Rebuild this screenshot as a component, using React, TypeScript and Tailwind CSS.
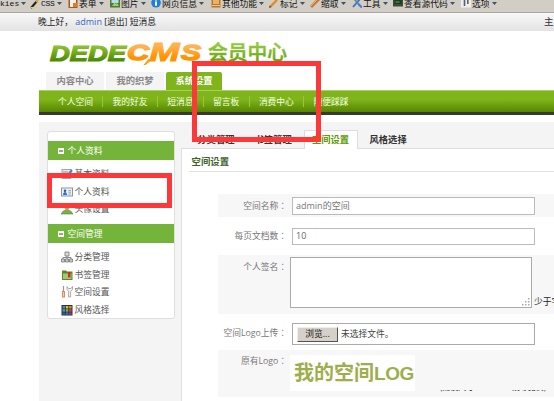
import React from 'react';

const toolbar = [
  { icon: 'css', label: 'CSS', w: 'w-[38px]' },
  { icon: 'form', label: '表单', w: 'w-[42px]' },
  { icon: 'image', label: '图片', w: 'w-[41px]' },
  { icon: 'info', label: '网页信息', w: 'w-[60px]' },
  { icon: 'misc', label: '其他功能', w: 'w-[58px]' },
  { icon: 'pencil', label: '标记', w: 'w-[41px]' },
  { icon: 'ruler', label: '缩取', w: 'w-[42px]' },
  { icon: 'tools', label: '工具', w: 'w-[41px]' },
  { icon: 'console', label: '查看源代码', w: 'w-[68px]' },
  { icon: 'options', label: '选项', w: 'w-[40px]' },
];

function ToolIcon({ name }: { name: string }) {
  return (
    <svg viewBox="0 0 10 10" className="h-[10px] w-[10px] shrink-0">
      {name === 'css' && (
        <>
          <path d="M1 9 7 2" stroke="#222" strokeWidth="2" />
          <path d="M1 8h6v1H0z" fill="#f0d040" />
          <path d="M6 3 9 0" stroke="#e0b030" strokeWidth="1.6" />
        </>
      )}
      {name === 'form' && (
        <>
          <rect x=".5" y="0" width="9" height="9" fill="#a85820" />
          <path d="M2 0h6v8H2z" fill="#f6f1ea" />
          <path d="M5 4h4v4H5z" fill="#e07a28" />
        </>
      )}
      {name === 'image' && (
        <>
          <rect x="0" y="0" width="10" height="8.5" fill="#4d7a34" />
          <path d="M1.500 1h7v3h-7z" fill="#b5dcec" />
          <path d="M2 7 4.500 3.500 6 5l1-1 2 3z" fill="#9fd069" />
        </>
      )}
      {name === 'info' && (
        <>
          <circle cx="5" cy="3.800" r="4.800" fill="#1d7edb" />
          <path d="M4 2.600h2v4.200H4zM4 0h2v1.500H4z" fill="#fff" />
        </>
      )}
      {name === 'misc' && (
        <>
          <rect x=".5" y="0" width="9" height="8.500" fill="#b8772c" />
          <path d="M2 0h6v5H2z" fill="#e7b566" />
          <path d="M1 6.500h8" stroke="#efca85" />
        </>
      )}
      {name === 'pencil' && (
        <>
          <path d="M1 8 8 1" stroke="#e08a2c" strokeWidth="2.400" />
          <path d="M0 9 .8 6.500 2.500 8z" fill="#704018" />
        </>
      )}
      {name === 'ruler' && (
        <>
          <path d="M1 8 9 0" stroke="#c87831" strokeWidth="3" />
          <path d="M1 7 8 0" stroke="#f0a860" />
        </>
      )}
      {name === 'tools' && (
        <>
          <path d="M1 8 8 0" stroke="#2e74c8" strokeWidth="1.800" />
          <path d="M2 0 9.500 8" stroke="#6e7c8c" strokeWidth="1.600" />
          <path d="M6 5 10 8.500" stroke="#3c82dc" strokeWidth="2" />
        </>
      )}
      {name === 'console' && (
        <>
          <rect x="0" y="0" width="10" height="7.500" fill="#40483f" />
          <path d="M1.500 1h7v4h-7z" fill="#1f3a20" />
          <path d="M2.500 3h4" stroke="#63b34a" />
        </>
      )}
      {name === 'options' && (
        <>
          <rect x="0" y="0" width="10" height="8.500" fill="#eceef0" />
          <path d="M3.500 0v7M6.800 0v5" stroke="#59616c" strokeWidth="1.600" />
        </>
      )}
    </svg>
  );
}

function Caret() {
  return (
    <svg viewBox="0 0 5 3" className="ml-[2px] h-[3px] w-[5px] shrink-0">
      <path d="M0 0h5L2.500 3z" fill="#3b5561" />
    </svg>
  );
}

function Logo() {
  return (
    <svg viewBox="0 0 240 30" className="h-[30px] w-[240px]">
      <defs>
        <linearGradient id="green" x1="0" y1="0" x2="0" y2="1">
          <stop offset=".25" stopColor="#8cc02c" />
          <stop offset=".55" stopColor="#6aa314" />
          <stop offset=".8" stopColor="#4e8c00" />
        </linearGradient>
        <linearGradient id="orange" x1="0" y1="0" x2="0" y2="1">
          <stop offset=".3" stopColor="#ffb24e" />
          <stop offset=".7" stopColor="#ff9200" />
        </linearGradient>
        <linearGradient id="lime" x1="0" y1="0" x2="0" y2="1">
          <stop offset=".3" stopColor="#92c83a" />
          <stop offset=".9" stopColor="#5f9f0c" />
        </linearGradient>
      </defs>
      <g fontFamily="'Liberation Sans', Arial, sans-serif" fontWeight="700" fontStyle="italic">
        <text x="1" y="19.500" fontSize="22.500" textLength="76" lengthAdjust="spacingAndGlyphs" fill="url(#green)" stroke="url(#green)" strokeWidth="1.200">DEDE</text>
        <text x="78" y="19.300" fontSize="22" textLength="22" lengthAdjust="spacingAndGlyphs" fill="url(#orange)" stroke="url(#orange)" strokeWidth="1.400">C</text>
        <text x="100.500" y="19.500" fontSize="25.500" textLength="30" lengthAdjust="spacingAndGlyphs" fill="url(#orange)" stroke="url(#orange)" strokeWidth="1">M</text>
        <text x="132" y="19.300" fontSize="22" textLength="20" lengthAdjust="spacingAndGlyphs" fill="url(#orange)" stroke="url(#orange)" strokeWidth="1.400">S</text>
      </g>
      <path d="m94.500 24 5-6h4.500l-7.500 6z" fill="#ff9a18" />
      <text x="159" y="18.800" fontSize="20" textLength="79" lengthAdjust="spacingAndGlyphs" fontFamily="'Noto Sans CJK SC', sans-serif" fontWeight="500" fill="url(#lime)" stroke="url(#lime)" strokeWidth=".5">会员中心</text>
    </svg>
  );
}

function SideIcon({ name }: { name: string }) {
  return (
    <svg viewBox="0 0 12 12" className="h-[12px] w-[12px] shrink-0">
      {name === 'edit' && (
        <>
          <rect x="1" y="1.500" width="9" height="9" fill="#e9ecee" stroke="#8b9299" strokeWidth=".8" />
          <path d="M2 4h5M2 6h4" stroke="#848b91" />
          <path d="M6 8 11 2" stroke="#3e85c8" strokeWidth="2" />
        </>
      )}
      {name === 'card' && (
        <>
          <rect x=".5" y="2" width="11" height="8" fill="#eef2f6" stroke="#8c949c" />
          <circle cx="4" cy="4.800" r="1.300" fill="#285a9c" />
          <path d="M2 9c0-4 4-4 4 0z" fill="#2c76cc" />
          <path d="M7.300 4.500H10M7.300 6.200H10M7.300 8H10" stroke="#8c949c" strokeWidth=".8" />
        </>
      )}
      {name === 'person' && (
        <>
          <circle cx="6" cy="4.500" r="2.500" fill="#c49a6c" />
          <path d="M0 10.500C1 8 4 6.500 6 6.500s5 1.500 6 4z" fill="#79ad4a" />
          <path d="M0 10.800h12" stroke="#558233" />
        </>
      )}
      {name === 'tree' && (
        <>
          <path d="M4 1h4v4H4z" fill="#d8d8d8" stroke="#777" strokeWidth=".8" />
          <path d="M6 5v3M2 8V6.500h8V8" stroke="#888" fill="none" />
          <path d="M.5 8h3v3h-3zM4.500 8h3v3h-3zM8.500 8h3v3h-3z" fill="#ccc" stroke="#777" strokeWidth=".8" />
        </>
      )}
      {name === 'book' && (
        <>
          <path d="M1 1.500h4l1 1h5.500v8.500H1z" fill="#5c8530" />
          <path d="M2 4.500h8.500v5.500H2z" fill="#a4c774" />
          <path d="M7 3h2.500v6L8.200 8 7 9z" fill="#cf3021" />
        </>
      )}
      {name === 'wrench' && (
        <>
          <path d="M2.500 0v5" stroke="#999" strokeWidth="1.200" />
          <path d="M2.500 5V11.500" stroke="#e8784c" strokeWidth="2.800" />
          <path d="M2.500 6v4.500" stroke="#ffc8ac" strokeWidth="1" />
          <path d="M6 .5v3l1.600 2V11h2V5.500L11.500 3.500v-3L10 2.500H7.400z" fill="#f2f2f2" stroke="#999" strokeWidth=".8" />
        </>
      )}
      {name === 'grid' && (
        <>
          <rect x=".5" y="1" width="11" height="10.500" fill="#27333f" />
          <path d="M1.500 2h2.500v2.500H1.500z" fill="#4685c4" />
          <path d="M4.800 2h2.500v2.500H4.800z" fill="#e3bd32" />
          <path d="M8.100 2h2.500v2.500H8.100z" fill="#e28e28" />
          <path d="M1.500 5.200h2.500v2.500H1.500z" fill="#3ba4b6" />
          <path d="M4.800 5.200h2.500v2.500H4.800z" fill="#78b83b" />
          <path d="M8.100 5.200h2.500v2.500H8.100z" fill="#d9442f" />
          <path d="M1.500 8.400h2.500v2.300H1.500z" fill="#4456a8" />
          <path d="M4.800 8.400h2.500v2.300H4.800z" fill="#3779c0" />
          <path d="M8.100 8.400h2.500v2.300H8.100z" fill="#8a3f94" />
        </>
      )}
    </svg>
  );
}

function SideHeader({ label }: { label: string }) {
  return (
    <div className="flex h-[19px] items-center bg-[#75b43a] pl-[10px] text-white">
      <svg viewBox="0 0 6 6" className="mr-[4px] h-[6px] w-[6px]">
        <rect width="6" height="6" rx=".5" fill="#fff" />
        <path d="M1 3h4" stroke="#2f5510" />
      </svg>
      {label}
    </div>
  );
}

function SideItem({ icon, label }: { icon: string; label: string }) {
  return (
    <div className="flex h-[17.500px] items-center gap-[2px] pl-[13px] text-[#555]">
      <SideIcon name={icon} />
      {label}
    </div>
  );
}

function Label({ children }: { children: React.ReactNode }) {
  return (
    <div className="w-[69px] shrink-0 whitespace-nowrap text-right text-[#777]">
      {children}
      <span className="font-['Noto_Sans_CJK_TC',sans-serif]">：</span>
    </div>
  );
}

const nav = ['个人空间', '我的好友', '短消息', '留言板', '消费中心', '随便踩踩'];

export default function App() {
  return (
    <div className="relative h-[401px] w-[554px] overflow-hidden bg-white font-['Open_Sans','Noto_Sans_CJK_SC',sans-serif] text-[8.750px] leading-[12px] text-[#333]">
      <div className="flex h-[13px] overflow-hidden border-b border-[#aaa7a2] bg-[#d2cec6] text-[#111]">
        <div className="flex h-[7px] w-[30px] shrink-0 items-center font-['Liberation_Mono',monospace] text-[8px]">
          kies
          <Caret />
        </div>
        {toolbar.map((t) => (
          <div key={t.icon} className={`flex h-[7px] shrink-0 items-center whitespace-nowrap ${t.w}`}>
            <ToolIcon name={t.icon} />
            <span className={t.icon === 'css' ? "ml-[1px] font-['Liberation_Mono',monospace] text-[8px] tracking-[-0.300px]" : 'ml-[1px]'}>{t.label}</span>
            <Caret />
          </div>
        ))}
      </div>

      <div className="flex h-[18px] items-center justify-between bg-linear-to-b from-[#f8f8f8] to-[#e3e3e3] pl-[38px]">
        <div className="whitespace-nowrap pb-[1px] text-[#222]">
          晚上好， <span className="text-[9px] text-[#3a66c4]">admin</span> [退出] 短消息
        </div>
        <div className="w-[10px] overflow-hidden whitespace-nowrap text-[9.500px]">主页</div>
      </div>

      <div className="h-[41px] pl-[49px] pt-[10px]">
        <Logo />
      </div>

      <div className="flex h-[18px] gap-[2px] pl-[46px] text-[9.300px] font-bold">
        <div className="flex w-[58px] items-center justify-center bg-[#f4f4f4] text-[#888]">内容中心</div>
        <div className="flex w-[58px] items-center justify-center bg-[#f4f4f4] text-[#888]">我的织梦</div>
        <div className="flex w-[56px] items-center justify-center rounded-t-[2px] bg-[#7fb41a] text-white">系统设置</div>
      </div>

      <div className="ml-[39px] flex h-[25px] items-center border-b-[3px] border-t border-b-[#363a32] border-t-[#a9cf62] bg-linear-to-b from-[#7fb51a] from-40% to-[#568600] pl-[19px] text-[#f4ffe0]">
        {nav.map((n, i) => (
          <React.Fragment key={n}>
            {i > 0 && <span className="mx-[9.300px] h-[11px] w-px bg-[#97c73a]" />}
            <span className="whitespace-nowrap">{n}</span>
          </React.Fragment>
        ))}
      </div>

      <div className="ml-[39px] mt-[7px] flex h-[285px] bg-[#f4f4f4] pl-[7.500px]">
        <aside className="mt-[9px] h-[188px] w-[128px] shrink-0 rounded-[3px] border border-[#dfdfdf] bg-white pt-[9px]">
          <SideHeader label="个人资料" />
          <div className="h-[64px] pt-[5.500px]">
            <SideItem icon="edit" label="基本资料" />
            <SideItem icon="card" label="个人资料" />
            <SideItem icon="person" label="头像设置" />
          </div>
          <SideHeader label="空间管理" />
          <div className="pt-[5.500px]">
            <SideItem icon="tree" label="分类管理" />
            <SideItem icon="book" label="书签管理" />
            <SideItem icon="wrench" label="空间设置" />
            <SideItem icon="grid" label="风格选择" />
          </div>
        </aside>

        <main className="ml-[6px] flex min-w-0 flex-1 flex-col">
          <div className="flex h-[27px] shrink-0 items-end text-[9.300px] font-bold text-[#333]">
            <div className="flex h-[18px] w-[65px] items-center justify-end border-b border-[#ddd] pr-[8px]">
              <span className="mr-[3px] whitespace-nowrap">分类管理</span>
            </div>
            <div className="flex h-[18px] w-[58px] items-center border-b border-[#ddd] pl-[9px]">书签管理</div>
            <div className="flex h-[19px] w-[54px] items-center justify-center border border-b-0 border-[#ddd] bg-white text-[#5c9a00]">空间设置</div>
            <div className="flex h-[18px] flex-1 items-center border-b border-[#ddd] pl-[12px]">风格选择</div>
          </div>

          <div className="flex-1 border-l border-[#e0e0e0] bg-white">
            <div className="ml-[7px] flex h-[23px] items-center border-b border-[#e2e2e2] pl-[3px] pt-[4px] text-[9.400px] font-bold text-[#40622a]">空间设置</div>

            <div className="ml-[36.500px] mt-[22px]">
              <div className="flex h-[23px] items-center bg-[#f7f7f7]">
                <Label>空间名称</Label>
                <div className="ml-[5px] flex h-[18px] w-[243px] items-center border border-[#bbb] bg-white pl-[3px] text-[9px] text-[#777]">admin的空间</div>
              </div>
              <div className="flex h-[38px] items-center">
                <Label>每页文档数</Label>
                <div className="ml-[5px] flex h-[17px] w-[243px] items-center border border-[#bbb] bg-white pl-[3px] text-[9px] text-[#666]">10</div>
              </div>
              <div className="flex h-[59px] items-start bg-[#f7f7f7] pt-[2px]">
                <div className="pt-[4px]">
                  <Label>个人签名</Label>
                </div>
                <div className="ml-[3px] flex h-[51px] w-[242px] shrink-0 items-end justify-end border border-[#aaa] bg-white">
                  <svg viewBox="0 0 9 9" className="h-[9px] w-[9px]" fill="#aaa">
                    <path d="M6 0h1.500v1.500H6zM6 3h1.500v1.500H6zM6 6h1.500v1.500H6zM3 3h1.500v1.500H3zM3 6h1.500v1.500H3zM0 6h1.500v1.500H0z" />
                  </svg>
                </div>
                <div className="ml-[2px] w-[20px] overflow-hidden whitespace-nowrap pt-[39px] text-[#222]">少于字</div>
              </div>
              <div className="flex h-[36px] items-start pt-[9px]">
                <div className="pt-[4px]">
                  <Label>空间Logo上传</Label>
                </div>
                <div className="ml-[5px] flex h-[22px] w-[243px] items-center border border-[#aaa] bg-white pl-[4px] text-[#444]">
                  <div className="mr-[3px] flex h-[15px] w-[41px] items-center justify-center border border-b-[#55524e] border-l-[#eee] border-r-[#55524e] border-t-[#eee] bg-[#d5d0c8] text-[#111]">浏览...</div>
                  未选择文件。
                </div>
              </div>
              <div className="flex h-[47px] items-start bg-[#f7f7f7] pt-[5px]">
                <div>
                  <Label>原有Logo</Label>
                </div>
                <div className="ml-[3px] flex h-[36px] w-[125px] shrink-0 items-center bg-white pl-[4px] font-['Liberation_Sans','Noto_Sans_CJK_SC',sans-serif] text-[20px] font-bold leading-none text-[#9eae4d]">
                  <span className="whitespace-nowrap">我的空间<span className="text-[19px] tracking-[-0.400px]">LOG</span></span>
                </div>
                <div className="ml-[25px] mt-[35px] flex h-[3px] items-end overflow-hidden whitespace-nowrap text-[8px] text-[#222]">
                  <span className="mb-[-2px] h-[12px] leading-[8px]">(建议尺寸： 120*60或等比例)</span>
                </div>
              </div>
              <div className="h-[8px] bg-white" />
            </div>
          </div>
        </main>
      </div>

      <div className="absolute left-[192px] top-[61px] h-[81px] w-[129px] border-[5px] border-[#fc3838]" />
      <div className="absolute left-[47px] top-[173px] h-[35px] w-[125px] border-[5px] border-[#fc3838]" />
    </div>
  );
}
